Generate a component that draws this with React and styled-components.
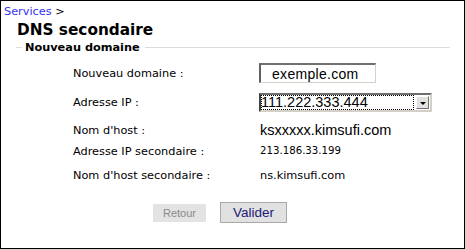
import React from 'react'
import styled, { createGlobalStyle } from 'styled-components'

const GlobalStyle = createGlobalStyle`
  body {
    margin: 0;
    background: #d4d0c8;
  }
`

function App() {
  return (
    <>
      <GlobalStyle />
      <Panel>
        <Breadcrumb>
          <Crumb href="#">Services</Crumb> &gt;
        </Breadcrumb>
        <Title>DNS secondaire</Title>
        <SectionHeader>Nouveau domaine</SectionHeader>
        <Fields>
          <Row $height={22}>
            <Label>Nouveau domaine :</Label>
            <TextInput defaultValue="exemple.com" />
          </Row>
          <Row $height={37}>
            <Label>Adresse IP :</Label>
            <SelectBox>
              <SelectValue>111.222.333.444</SelectValue>
              <ArrowButton />
            </SelectBox>
          </Row>
          <Row $height={18}>
            <Label>Nom d'host :</Label>
            <Value $size={14.5} $family="'Liberation Sans', Arial, sans-serif">ksxxxxx.kimsufi.com</Value>
          </Row>
          <Row $height={24}>
            <Label>Adresse IP secondaire :</Label>
            <Value $size={10.2}>213.186.33.199</Value>
          </Row>
          <Row $height={25}>
            <Label>Nom d'host secondaire :</Label>
            <Value $size={11.3}>ns.kimsufi.com</Value>
          </Row>
        </Fields>
        <Actions>
          <BackButton disabled>Retour</BackButton>
          <SubmitButton>Valider</SubmitButton>
        </Actions>
      </Panel>
    </>
  )
}

export default App

const Panel = styled.div`
  width: 465px;
  height: 249px;
  box-sizing: border-box;
  border: 1px solid #000;
  background: #fff;
  font-family: 'DejaVu Sans', Verdana, sans-serif;
  color: #000;
`

const Breadcrumb = styled.div`
  padding: 3.5px 0 0 3px;
  font-size: 11.3px;
  line-height: 13px;
`

const Crumb = styled.a`
  color: #3232f0;
  text-decoration: none;
`

const Title = styled.h1`
  margin: 3px 0 0 16px;
  font-size: 15.3px;
  line-height: 18px;
  font-weight: bold;
`

const SectionHeader = styled.div`
  margin: 2px 14px 0 15px;
  height: 13px;
  display: flex;
  align-items: center;
  font-size: 11.3px;
  font-weight: bold;
  white-space: nowrap;
  &::before,
  &::after {
    content: '';
    height: 1px;
    background: #dcdcdc;
  }
  &::before {
    width: 6px;
    margin-right: 3px;
  }
  &::after {
    flex: 1;
    margin-left: 5px;
  }
`

const Fields = styled.div`
  margin: 8.5px 0 0 72px;
  display: flex;
  flex-direction: column;
`

const Row = styled.div`
  display: flex;
  align-items: center;
  height: ${(p) => p.$height}px;
`

const Label = styled.span`
  width: 186px;
  flex: none;
  font-size: 11.3px;
  line-height: 13px;
`

const Value = styled.span`
  font-family: ${(p) => p.$family || "'DejaVu Sans', Verdana, sans-serif"};
  font-size: ${(p) => p.$size}px;
  line-height: 1.15;
  padding-left: 1px;
`

const TextInput = styled.input`
  width: 117px;
  height: 20px;
  box-sizing: border-box;
  margin: 0;
  padding: 0 0 0 11px;
  border-style: solid;
  border-width: 2px 1px 1px 2px;
  border-color: #707070 #d4d0c8 #d4d0c8 #606060;
  background: #fff;
  font-family: 'Liberation Sans', Arial, sans-serif;
  font-size: 14px;
  letter-spacing: 0.3px;
  color: #000;
  outline: none;
`

const SelectBox = styled.div`
  width: 173px;
  height: 19px;
  box-sizing: border-box;
  display: flex;
  align-items: center;
  border-style: solid;
  border-width: 2px;
  border-color: #6e6e6e #d4d0c8 #d4d0c8 #404040;
  background: #fff;
`

const SelectValue = styled.span`
  flex: 1;
  align-self: stretch;
  display: flex;
  align-items: center;
  outline: 1px dotted #000;
  outline-offset: -1px;
  font-family: 'Liberation Sans', Arial, sans-serif;
  font-size: 14.5px;
  line-height: 1;
  overflow: hidden;
`

const ArrowButton = styled.span`
  width: 13px;
  height: 13px;
  box-sizing: border-box;
  margin: 0 1px 0 2px;
  flex: none;
  display: flex;
  align-items: center;
  justify-content: center;
  background: #e2e2e2;
  border-style: solid;
  border-width: 1px;
  border-color: #fff #707070 #707070 #fff;
  &::after {
    content: '';
    border-left: 3px solid transparent;
    border-right: 3px solid transparent;
    border-top: 3px solid #000;
    margin-top: 2px;
  }
`

const Actions = styled.div`
  margin: 14px 0 0 152px;
  display: flex;
  align-items: center;
  gap: 14px;
`

const BackButton = styled.button`
  width: 53px;
  height: 18px;
  margin: 0;
  padding: 0;
  border: none;
  background: #e3e3e3;
  color: #8a8a8a;
  font-family: 'Liberation Sans', Arial, sans-serif;
  font-size: 11px;
`

const SubmitButton = styled.button`
  width: 67px;
  height: 21px;
  margin: 0;
  padding: 0;
  border: 1px solid #a8a8a8;
  background: #e1e1e1;
  color: #1b1b78;
  font-family: 'Liberation Sans', Arial, sans-serif;
  font-size: 13.5px;
`
